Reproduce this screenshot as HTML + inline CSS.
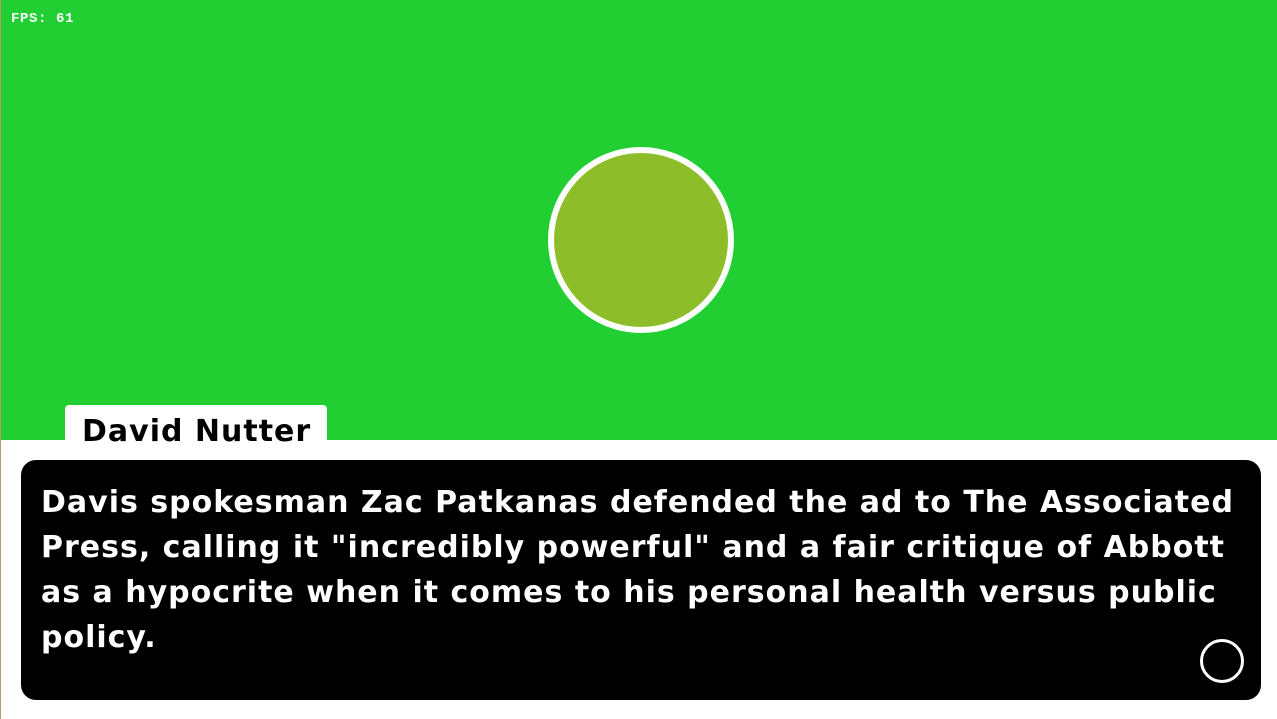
<!DOCTYPE html>
<html><head><meta charset="utf-8"><style>
html,body{margin:0;padding:0;width:1277px;height:719px;overflow:hidden;background:#fff;position:relative;font-family:"DejaVu Sans","Liberation Sans",sans-serif;}
#bg{position:absolute;left:0;top:0;width:1277px;height:440px;background:#22cf33;}
#edge{position:absolute;left:0;top:0;width:1px;height:719px;background:#b89a6a;}
#fps{position:absolute;left:11px;top:11px;color:#fff;font:bold 14px "Liberation Mono","DejaVu Sans Mono",monospace;letter-spacing:0.6px;}
#ball{position:absolute;left:548px;top:147px;width:174px;height:174px;border:6px solid #fff;border-radius:50%;background:#8dbe2a;}
#name{position:absolute;left:65px;top:405px;width:262px;height:50px;background:#fff;border-radius:4px 4px 0 0;}
#name span{position:absolute;left:17px;top:9px;font-weight:bold;font-size:30px;color:#000;letter-spacing:1px;}
#box{position:absolute;left:21px;top:460px;width:1240px;height:240px;background:#000;border-radius:15px;}
#txt{position:absolute;left:20px;top:20px;width:1212px;color:#fff;font-weight:bold;font-size:30px;line-height:45px;letter-spacing:1px;}
#btn{position:absolute;left:1200px;top:639px;width:38px;height:38px;border:3px solid #fff;border-radius:50%;}
</style></head><body>
<div id="bg"></div>
<div id="edge"></div>
<div id="fps">FPS: 61</div>
<div id="ball"></div>
<div id="name"><span>David Nutter</span></div>
<div id="box"><div id="txt">Davis spokesman Zac Patkanas defended the ad to The Associated Press, calling it "incredibly powerful" and a fair critique of Abbott as a hypocrite when it comes to his personal health versus public policy.</div></div>
<div id="btn"></div>
</body></html>
